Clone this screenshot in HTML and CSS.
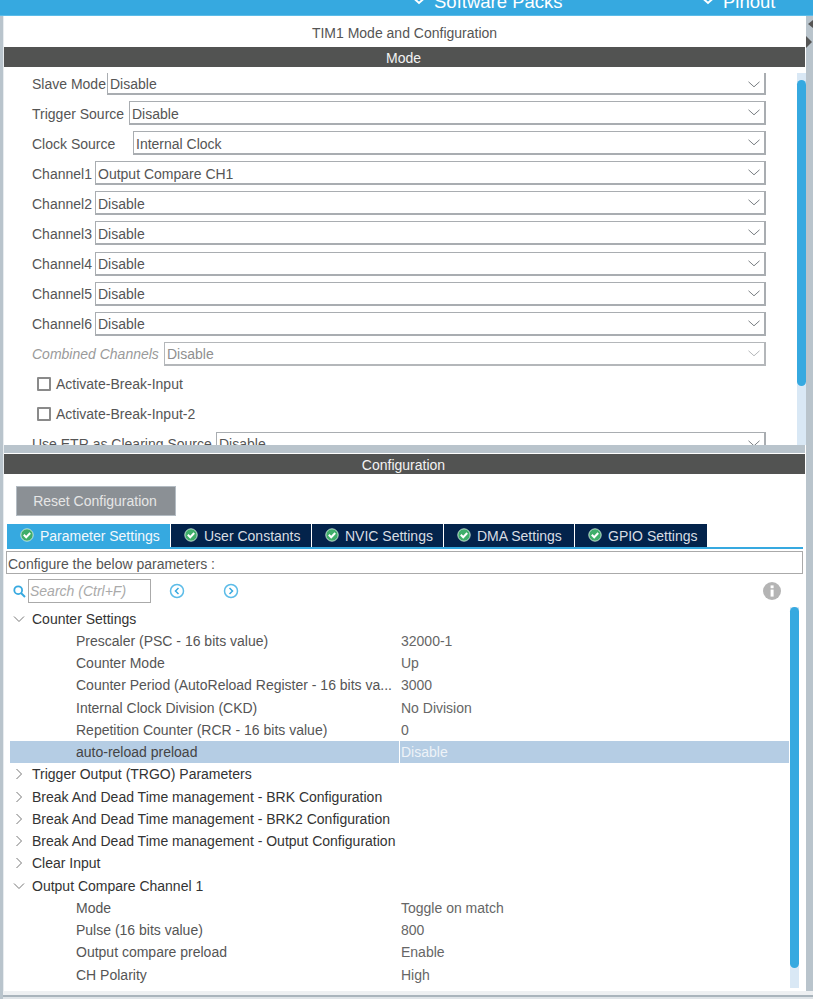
FILE: index.html
```html
<!DOCTYPE html>
<html lang="en">
<head>
<meta charset="utf-8">
<title>TIM1 Mode and Configuration</title>
<link rel="stylesheet" href="styles.css">
</head>
<body>
<svg class="defs" width="0" height="0" aria-hidden="true">
  <symbol id="chev" viewBox="0 0 12 7"><path d="M.5 .8l5.5 5 5.5-5" fill="none" stroke="#7a7f83" stroke-width="1"/></symbol>
  <symbol id="check" viewBox="0 0 14 14"><circle cx="7" cy="7" r="6.2" fill="#3fae6a" stroke="#e3f4ea" stroke-width=".8"/><path d="M3.8 6.8l2.4 2.5L10.2 5" fill="none" stroke="#fff" stroke-width="2"/></symbol>
  <symbol id="open" viewBox="0 0 12 8"><path d="M1 1.5l5 5 5-5" fill="none" stroke="#777" stroke-width="1"/></symbol>
  <symbol id="closed" viewBox="0 0 8 12"><path d="M1.5 1l5 5-5 5" fill="none" stroke="#777" stroke-width="1"/></symbol>
</svg>
<div class="app">
  <header class="topbar">
    <div class="topitem packs"><svg class="topchev" viewBox="0 0 14 8"><path d="M1.5 1l5.5 5 5.5-5" fill="none" stroke="#fff" stroke-width="2"/></svg><span>Software Packs</span></div>
    <div class="topitem pinout"><svg class="topchev" viewBox="0 0 14 8"><path d="M1.5 1l5.5 5 5.5-5" fill="none" stroke="#fff" stroke-width="2"/></svg><span>Pinout</span></div>
  </header>
  <svg class="sash-arrows" viewBox="0 0 7 28"><path d="M7 0L2 4l5 4z" fill="#555"/><path d="M0 16l6 6-6 6z" fill="#555"/></svg>
  <main class="panel">
    <h1 class="title">TIM1 Mode and Configuration</h1>
    <h2 class="bar">Mode</h2>
    <section class="mode">
      <div class="row row-first"><label class="lbl l-slave">Slave Mode</label><div class="sel sel-cut"><span>Disable</span><svg class="chev"><use href="#chev"/></svg></div></div>
      <div class="row"><label class="lbl l-trigger">Trigger Source</label><div class="sel"><span>Disable</span><svg class="chev"><use href="#chev"/></svg></div></div>
      <div class="row"><label class="lbl l-clock">Clock Source</label><div class="sel"><span>Internal Clock</span><svg class="chev"><use href="#chev"/></svg></div></div>
      <div class="row"><label class="lbl l-chan">Channel1</label><div class="sel"><span>Output Compare CH1</span><svg class="chev"><use href="#chev"/></svg></div></div>
      <div class="row"><label class="lbl l-chan">Channel2</label><div class="sel"><span>Disable</span><svg class="chev"><use href="#chev"/></svg></div></div>
      <div class="row row-extra"><label class="lbl l-chan">Channel3</label><div class="sel"><span>Disable</span><svg class="chev"><use href="#chev"/></svg></div></div>
      <div class="row"><label class="lbl l-chan">Channel4</label><div class="sel"><span>Disable</span><svg class="chev"><use href="#chev"/></svg></div></div>
      <div class="row"><label class="lbl l-chan">Channel5</label><div class="sel"><span>Disable</span><svg class="chev"><use href="#chev"/></svg></div></div>
      <div class="row"><label class="lbl l-chan">Channel6</label><div class="sel"><span>Disable</span><svg class="chev"><use href="#chev"/></svg></div></div>
      <div class="row row-dis"><label class="lbl l-comb">Combined Channels</label><div class="sel"><span>Disable</span><svg class="chev"><use href="#chev"/></svg></div></div>
      <div class="row row-check"><span class="box"></span><span>Activate-Break-Input</span></div>
      <div class="row row-check"><span class="box"></span><span>Activate-Break-Input-2</span></div>
      <div class="row"><label class="lbl l-etr">Use ETR as Clearing Source</label><div class="sel"><span>Disable</span><svg class="chev"><use href="#chev"/></svg></div></div>
      <div class="scroll scroll-mode"><div class="thumb"></div></div>
    </section>
    <div class="sash"></div>
    <h2 class="bar">Configuration</h2>
    <section class="config">
      <div class="reset">Reset Configuration</div>
      <nav class="tabs">
        <div class="tab tab-on t1"><svg class="ok"><use href="#check"/></svg>Parameter Settings</div>
        <div class="tab t2"><svg class="ok"><use href="#check"/></svg>User Constants</div>
        <div class="tab t3"><svg class="ok"><use href="#check"/></svg>NVIC Settings</div>
        <div class="tab t4"><svg class="ok"><use href="#check"/></svg>DMA Settings</div>
        <div class="tab t5"><svg class="ok"><use href="#check"/></svg>GPIO Settings</div>
      </nav>
      <div class="hint">Configure the below parameters :</div>
      <div class="searchrow">
        <svg class="mag" viewBox="0 0 13 13"><circle cx="5.2" cy="5.2" r="3.9" fill="none" stroke="#36a9e0" stroke-width="1.8"/><path d="M8 8l4 4" stroke="#36a9e0" stroke-width="2"/></svg>
        <div class="search">Search (Ctrl+F)</div>
        <svg class="nav nav-prev" viewBox="0 0 16 16"><circle cx="8" cy="8" r="6.5" fill="none" stroke="#5cbce8" stroke-width="1.5"/><path d="M9.5 5L6.5 8l3 3" fill="none" stroke="#36a9e0" stroke-width="1.5"/></svg>
        <svg class="nav nav-next" viewBox="0 0 16 16"><circle cx="8" cy="8" r="6.5" fill="none" stroke="#5cbce8" stroke-width="1.5"/><path d="M6.5 5l3 3-3 3" fill="none" stroke="#36a9e0" stroke-width="1.5"/></svg>
        <svg class="info" viewBox="0 0 18 18"><circle cx="9" cy="9" r="9" fill="#b4b4b4"/><rect x="7.6" y="7.6" width="3" height="7" fill="#fff"/><rect x="7.6" y="3.4" width="3" height="2.8" fill="#fff"/></svg>
      </div>
      <div class="tree">
        <div class="node group"><svg class="tw tw-open"><use href="#open"/></svg><span>Counter Settings</span></div>
        <div class="node leaf"><span class="name">Prescaler (PSC - 16 bits value)</span><span class="val">32000-1</span></div>
        <div class="node leaf"><span class="name">Counter Mode</span><span class="val">Up</span></div>
        <div class="node leaf"><span class="name">Counter Period (AutoReload Register - 16 bits va...</span><span class="val">3000</span></div>
        <div class="node leaf"><span class="name">Internal Clock Division (CKD)</span><span class="val">No Division</span></div>
        <div class="node leaf"><span class="name">Repetition Counter (RCR - 16 bits value)</span><span class="val">0</span></div>
        <div class="node leaf sel-row"><span class="name">auto-reload preload</span><span class="val">Disable</span></div>
        <div class="node group"><svg class="tw tw-closed"><use href="#closed"/></svg><span>Trigger Output (TRGO) Parameters</span></div>
        <div class="node group"><svg class="tw tw-closed"><use href="#closed"/></svg><span>Break And Dead Time management - BRK Configuration</span></div>
        <div class="node group"><svg class="tw tw-closed"><use href="#closed"/></svg><span>Break And Dead Time management - BRK2 Configuration</span></div>
        <div class="node group"><svg class="tw tw-closed"><use href="#closed"/></svg><span>Break And Dead Time management - Output Configuration</span></div>
        <div class="node group"><svg class="tw tw-closed"><use href="#closed"/></svg><span>Clear Input</span></div>
        <div class="node group"><svg class="tw tw-open"><use href="#open"/></svg><span>Output Compare Channel 1</span></div>
        <div class="node leaf"><span class="name">Mode</span><span class="val">Toggle on match</span></div>
        <div class="node leaf"><span class="name">Pulse (16 bits value)</span><span class="val">800</span></div>
        <div class="node leaf"><span class="name">Output compare preload</span><span class="val">Enable</span></div>
        <div class="node leaf"><span class="name">CH Polarity</span><span class="val">High</span></div>
      </div>
      <div class="scroll scroll-tree"><div class="thumb"></div></div>
    </section>
  </main>
  <footer class="foot"></footer>
</div>
</body>
</html>
```

FILE: styles.css
```css
* { box-sizing: border-box; }
html, body { margin: 0; padding: 0; }
body {
  width: 813px; height: 999px; overflow: hidden;
  background: #b9c4cc;
  font-family: "Liberation Sans", Arial, sans-serif;
  font-size: 14px; color: #555;
}
.defs { position: absolute; }
.app { position: relative; height: 999px; display: flex; flex-direction: column; overflow: hidden; }

.topbar {
  height: 16px; flex: none; background: #36a9e0; color: #fff;
  border-bottom: 1px solid #5cbce8;
  display: flex; overflow: hidden; font-size: 18.5px; line-height: 16px;
}
.topitem { display: flex; align-items: flex-start; height: 16px; }
.topitem span { margin-top: -6px; display: block; }
.packs { margin-left: 412px; width: 289px; }
.pinout { margin-left: 0; }
.topchev { width: 14px; height: 8px; margin: -3px 8px 0 0; flex: none; }

.sash-arrows { position: absolute; left: 806px; top: 20px; width: 7px; height: 28px; }

.panel {
  width: 803px; margin-left: 3px; height: 975px; flex: none;
  background: #fff; border-left: 1px solid #e8ecef;
  display: flex; flex-direction: column;
}
.title {
  margin: 0; height: 31px; font-size: 14px; font-weight: 400; color: #555;
  text-align: center; line-height: 35px; padding-right: 1px;
}
.bar {
  margin: 0 1px 0 0; height: 20px; flex: none; background: #525352; color: #f2f2f2;
  font-size: 14px; font-weight: 400; line-height: 22px; text-align: center;
  padding-right: 2px;
}

.mode { position: relative; height: 378px; flex: none; overflow: hidden; padding: 6px 0 0 28px; }
.row { display: flex; height: 24px; margin-bottom: 6px; align-items: stretch; width: 734px; }
.row-first { height: 22px; }
.row-extra { margin-bottom: 7px; }
.lbl { display: block; line-height: 26px; flex: none; color: #555; white-space: nowrap; }
.row-first .lbl { line-height: 22px; }
.row-extra ~ .row .lbl { line-height: 24px; }
.l-slave { width: 75px; }
.l-trigger { width: 97px; }
.l-clock { width: 101px; }
.l-chan { width: 63px; }
.l-comb { width: 132px; }
.l-etr { width: 184px; }
.sel {
  flex: 1; border: 1px solid #a9adb1; border-width: 1px 2px 2px 1px; background: #fff;
  display: flex; justify-content: space-between; align-items: center;
  padding: 0 4px 0 2px; line-height: 21px; color: #555;
}
.sel span { margin-top: 4px; }
.row-extra ~ .row .sel span { margin-top: 2px; }
.sel-cut { border-top: 0; padding-top: 2px; }
.row-first .sel span { margin-top: 0; }
.chev { width: 12px; height: 7px; }
.row-dis .lbl { color: #9a9a9a; font-style: italic; }
.row-dis .sel { color: #8f8f8f; border-color: #b4b7ba; }
.row-dis .chev { opacity: .55; }
.row-check { align-items: center; padding-left: 5px; gap: 5px; line-height: 24px; }
.box { width: 14px; height: 14px; border: 2px solid #8a8a8a; border-radius: 1px; flex: none; background: #fff; }

.scroll { position: absolute; background: #d9e8f5; }
.thumb { background: #36a9e0; border-radius: 5px; }
.scroll-mode { left: 793px; top: 6px; width: 9px; height: 372px; }
.scroll-mode .thumb { margin-top: 7px; height: 306px; }

.sash { height: 9px; flex: none; background: #b9c4cc; border-bottom: 1px solid #fff; margin-right: 1px; }

.config { position: relative; flex: 1; padding: 12px 0 0 2px; }
.reset {
  width: 160px; height: 30px; margin-left: 10px; background: #8b9095;
  border: 1px solid #b4bcc3; color: #e6e6e6; text-align: center; line-height: 29px;
  padding-right: 2px;
}
.tabs {
  display: flex; gap: 1px; margin: 8px 0 0 1px; width: 796px; height: 25px;
  border-bottom: 2px solid #36a9e0; padding-bottom: 0;
}
.tab {
  height: 23px; background: #03234b; color: #d8dde3; line-height: 22px; flex: none;
  display: flex; align-items: center; padding: 1px 0 0 13px;
}
.tab-on { background: #36a9e0; color: #f2f8fc; }
.t1 { width: 163px; }
.t2 { width: 140px; }
.t3 { width: 131px; }
.t4 { width: 130px; }
.t5 { width: 132px; }
.ok { width: 14px; height: 14px; margin: -2px 6px 0 0; flex: none; }

.hint {
  width: 797px; height: 23px; margin: 2px 0 0 0; border: 1px solid #aaa;
  padding-left: 1px; line-height: 24px; color: #555;
}
.searchrow { position: relative; display: flex; align-items: center; height: 24px; margin-top: 5px; }
.mag { width: 13px; height: 13px; margin: 0 2px 0 7px; flex: none; }
.search {
  width: 123px; height: 24px; border: 1px solid #aaa; padding-left: 1px;
  color: #aaa; font-style: italic; line-height: 22px; flex: none;
}
.nav { width: 16px; height: 16px; flex: none; }
.nav-prev { margin-left: 18px; }
.nav-next { margin-left: 38px; }
.info { width: 18px; height: 18px; margin-left: 524px; flex: none; }

.tree { margin: 4.4px 0 0 4px; width: 779px; }
.node { display: flex; height: 22.25px; line-height: 22px; align-items: center; white-space: nowrap; }
.group { color: #333; }
.tw { flex: none; }
.tw-open { width: 12px; height: 8px; margin: 0 7px 0 3px; }
.tw-closed { width: 8px; height: 12px; margin: 0 9px 0 5px; }
.leaf { padding-left: 66px; color: #555; }
.name { width: 323px; flex: none; overflow: hidden; }
.val { color: #666; padding-left: 2px; }
.sel-row { background: #b5cde4; color: #444; }
.sel-row .val { color: #eef3f8; border-left: 1px solid #fff; padding-left: 1px; height: 100%; }
.scroll-tree { left: 786px; top: 133px; width: 9px; height: 381px; }
.scroll-tree .thumb { height: 361px; }

.foot { flex: 1; margin-left: 3px; background: #eef0f2; border-bottom: 2px solid #dfe4e8; box-shadow: inset 0 -2px 0 #a9b4bc; }
```
